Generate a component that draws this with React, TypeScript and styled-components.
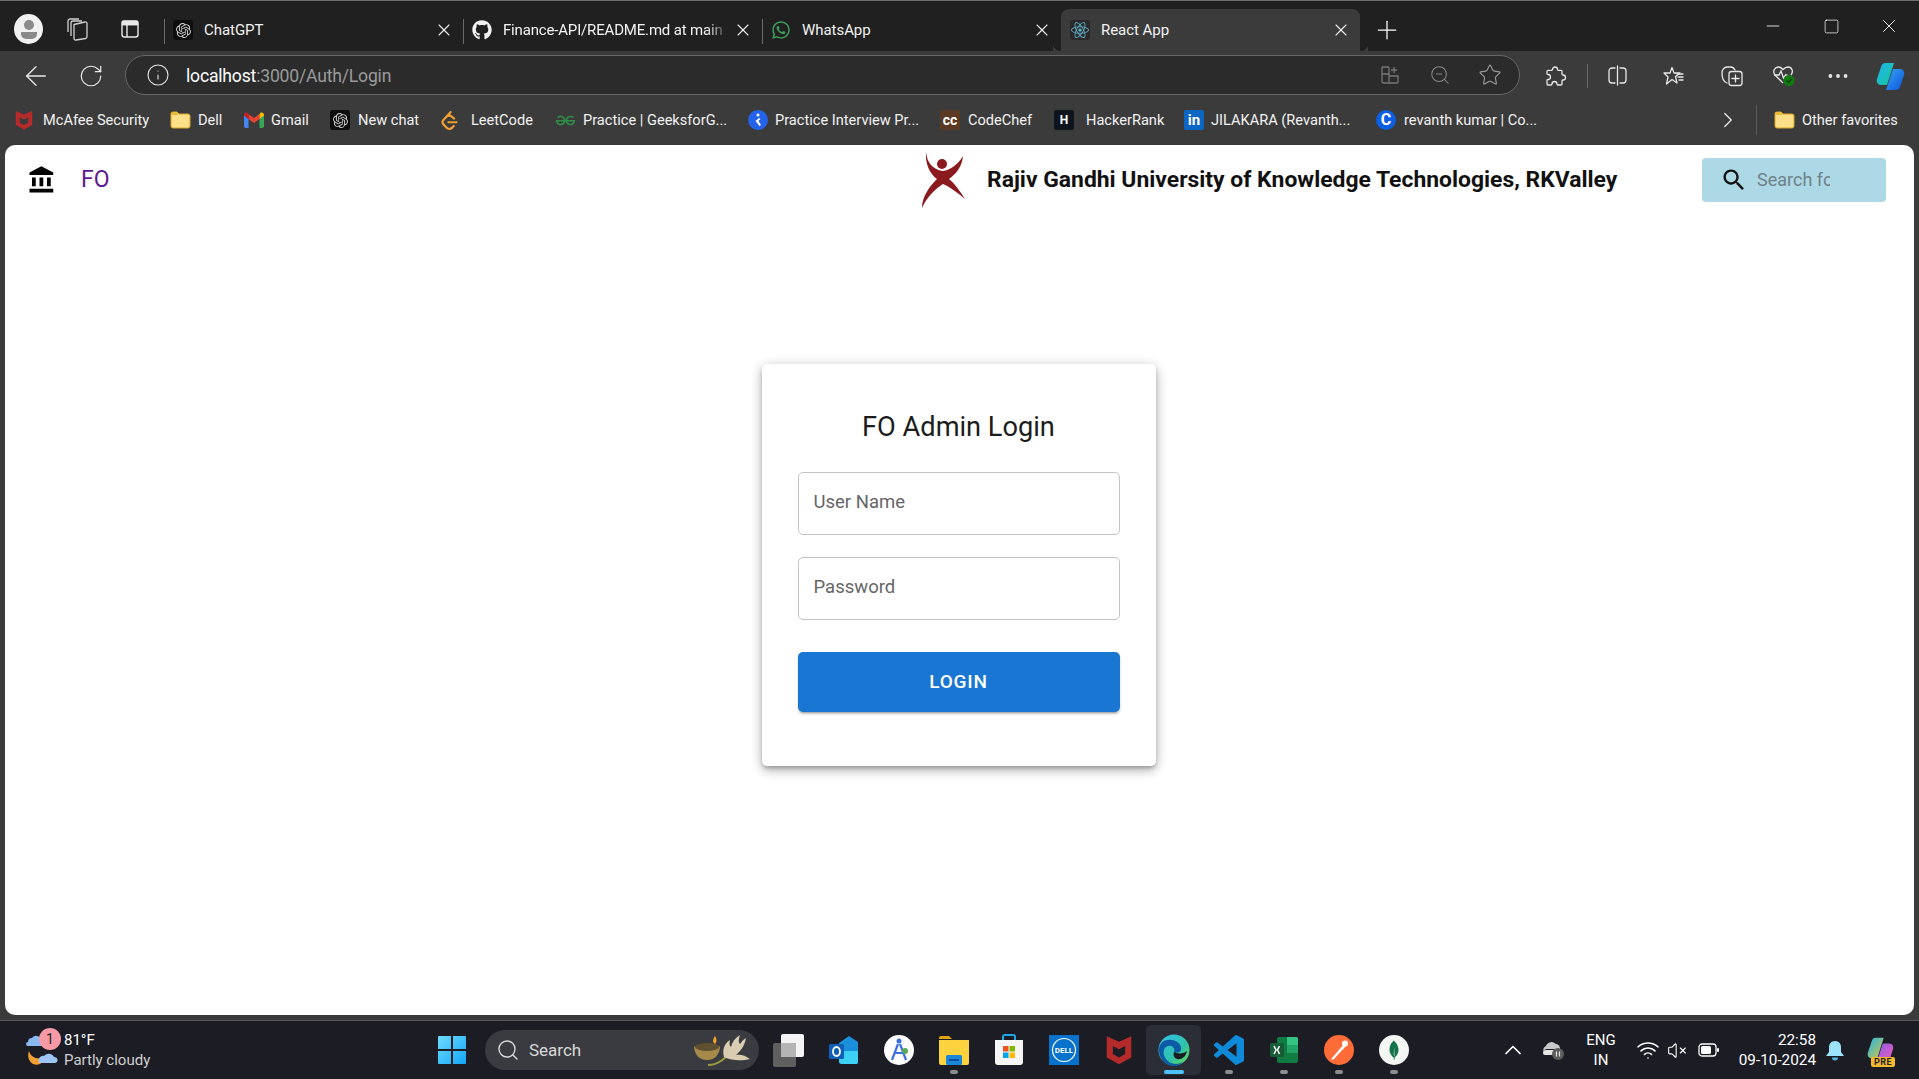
import styled, { createGlobalStyle } from "styled-components";
import type { ReactNode } from "react";
import { ArrowLeft, ChevronRight, ChevronUp, Info, Minus, MoreHorizontal, Plus, RotateCw, Search, Square, Star, VolumeX, Wifi, X, ZoomOut } from "lucide-react";
import { FaGithub, FaReact, FaWhatsapp } from "react-icons/fa";
import { SiGeeksforgeeks, SiLeetcode, SiMongodb, SiOpenai } from "react-icons/si";

const GlobalStyle = createGlobalStyle`
  html, body {
    margin: 0;
    padding: 0;
    overflow: hidden;
    background: #3b3b3b;
  }
  * {
    box-sizing: border-box;
  }
`;

const Screen = styled.div`
  width: 1919px;
  height: 1079px;
  display: flex;
  flex-direction: column;
  background: #3b3b3b;
  font-family: Roboto, "Liberation Sans", sans-serif;
  overflow: hidden;
`;

/* tab strip */
const TabStrip = styled.div`
  height: 51px;
  flex: none;
  display: flex;
  background: #202020;
  border-top: 1px solid #6e6e6e;
  color: #fff;
`;

const StripTools = styled.div`
  width: 164px;
  flex: none;
  display: flex;
  align-items: center;
  padding: 6px 0 0 14px;
`;

const Avatar = styled.div`
  width: 29px;
  height: 30px;
  flex: none;
  border-radius: 50%;
  background: #f1f1f1;
  display: flex;
  align-items: center;
  justify-content: center;
  margin-right: 22px;
`;

const StripIcon = styled.div<{ $w: number; $ml?: number }>`
  width: ${(p) => p.$w}px;
  margin-left: ${(p) => p.$ml || 0}px;
  flex: none;
  display: flex;
  justify-content: center;
`;

const Tab = styled.div<{ $active?: boolean; $sep?: boolean }>`
  position: relative;
  width: 299px;
  flex: none;
  height: 42px;
  margin-top: 8px;
  padding: 0 9px;
  display: flex;
  align-items: center;
  gap: 11px;
  font-size: 15px;
  color: #f2f2f2;
  border-radius: 8px 8px 0 0;
  background: ${(p) => (p.$active ? "#3b3b3b" : "transparent")};
  &::before {
    content: "";
    display: ${(p) => (p.$sep ? "block" : "none")};
    position: absolute;
    left: 0;
    top: 10px;
    width: 1px;
    height: 25px;
    background: #6a6a6a;
  }
  &::after {
    content: "";
    display: ${(p) => (p.$active ? "block" : "none")};
    position: absolute;
    bottom: 0;
    left: -8px;
    width: 315px;
    height: 8px;
    background:
      radial-gradient(circle at 0 0, #202020 8px, #3b3b3b 8.5px) right bottom / 8px 8px no-repeat,
      radial-gradient(circle at 100% 0, #202020 8px, #3b3b3b 8.5px) left bottom / 8px 8px no-repeat;
  }
`;

const Favicon = styled.span<{ $bg?: string }>`
  width: 20px;
  height: 20px;
  flex: none;
  display: flex;
  align-items: center;
  justify-content: center;
  border-radius: 3px;
  background: ${(p) => p.$bg || "transparent"};
`;

const TabTitle = styled.span<{ $fade?: boolean }>`
  flex: 1;
  margin-right: -7px;
  letter-spacing: ${(p) => (p.$fade ? "-0.17px" : "-0.05px")};
  white-space: nowrap;
  overflow: hidden;
  mask-image: ${(p) => (p.$fade ? "linear-gradient(to right, #000 90%, transparent)" : "none")};
`;

const TabClose = styled.span`
  width: 20px;
  flex: none;
  display: flex;
  justify-content: center;
`;

const NewTab = styled.div`
  width: 54px;
  flex: none;
  margin-top: 8px;
  display: flex;
  align-items: center;
  justify-content: center;
`;

const WindowButtons = styled.div`
  margin-left: auto;
  display: flex;
  align-items: center;
  padding-right: 1px;
`;

const WindowButton = styled.div`
  width: 58px;
  display: flex;
  justify-content: center;
`;

/* address bar */
const Toolbar = styled.div`
  height: 44px;
  flex: none;
  display: flex;
  align-items: flex-end;
  padding-left: 8px;
  color: #e8e8e8;
`;

const ToolSlot = styled.div<{ $w: number }>`
  width: ${(p) => p.$w}px;
  height: 39px;
  flex: none;
  display: flex;
  align-items: center;
  justify-content: center;
`;

const AddressBar = styled.div`
  width: 1395px;
  height: 40px;
  margin: 0 8px 0 7px;
  flex: none;
  display: flex;
  align-items: center;
  padding: 0 4px 0 20px;
  background: #2b2b2b;
  border: 1px solid #686868;
  border-radius: 20px;
`;

const Url = styled.div`
  margin-left: 16px;
  padding-top: 2px;
  font-size: 17.6px;
  letter-spacing: -0.2px;
  color: #9a9a9a;
  flex: 1;
  b {
    font-weight: 400;
    color: #fff;
  }
`;

const ToolDivider = styled.div`
  width: 1px;
  height: 24px;
  margin: 8px 0 7px 3px;
  background: #6a6a6a;
  flex: none;
`;

/* bookmarks */
const BookmarkBar = styled.div`
  height: 50px;
  flex: none;
  display: flex;
  align-items: center;
  padding-left: 13px;
  font-size: 14.6px;
  color: #f2f2f2;
`;

const Bookmark = styled.div<{ $w: number; $gap?: number }>`
  width: ${(p) => p.$w}px;
  flex: none;
  display: flex;
  align-items: center;
  gap: ${(p) => p.$gap || 7}px;
  white-space: nowrap;
`;

const BookmarkIcon = styled.span`
  width: 22px;
  flex: none;
  display: flex;
  justify-content: center;
`;

const BookmarkEnd = styled.div`
  margin-left: auto;
  display: flex;
  align-items: center;
  padding-right: 19px;
`;

const BarRule = styled.div`
  width: 1px;
  height: 30px;
  background: #5a5a5a;
  margin: 0 16px 0 15px;
`;

/* page */
const Page = styled.div`
  flex: 1;
  margin: 0 5px 5px;
  padding-right: 2px;
  background: #fff;
  border-radius: 10px;
  display: flex;
  flex-direction: column;
  align-items: center;
`;

const AppHeader = styled.header`
  width: 1909px;
  flex: none;
  align-self: flex-start;
  height: 69px;
  display: flex;
  align-items: center;
  padding: 0 28px 0 22px;
`;

const HeaderBrand = styled.div`
  width: 894px;
  flex: none;
  display: flex;
  align-items: center;
  gap: 24px;
  font-size: 23px;
  color: #5e1a8e;
`;

const College = styled.div`
  display: flex;
  align-items: center;
  gap: 20px;
  font-size: 22.9px;
  font-weight: 700;
  color: #111;
  white-space: nowrap;
`;

const SearchBox = styled.div`
  margin-left: auto;
  width: 184px;
  height: 44px;
  background: #add8e6;
  border-radius: 4px;
  display: flex;
  align-items: center;
  padding-left: 18px;
  gap: 9px;
`;

const SearchText = styled.span`
  width: 73px;
  overflow: hidden;
  white-space: nowrap;
  font-size: 18px;
  color: #6f8289;
`;

const Card = styled.form`
  width: 394px;
  height: 402px;
  margin-top: 150px;
  padding: 0 36px;
  background: #fff;
  border-radius: 5px;
  box-shadow: 0 3px 4px -1px rgba(0, 0, 0, 0.25), 0 5px 12px rgba(0, 0, 0, 0.2), 0 1px 14px rgba(0, 0, 0, 0.12);
  display: flex;
  flex-direction: column;
`;

const CardTitle = styled.h2`
  margin: 44px 0 26px;
  height: 38px;
  line-height: 38px;
  text-align: center;
  font-size: 27.2px;
  font-weight: 400;
  color: #1c1c1c;
`;

const Field = styled.input`
  width: 322px;
  height: 63px;
  margin-bottom: 22px;
  padding: 0 15px 3px;
  border: 1px solid #c4c4c4;
  border-radius: 5px;
  font-family: inherit;
  font-size: 18.5px;
  background: #fff;
  &::placeholder {
    color: #666;
    opacity: 1;
  }
`;

const LoginButton = styled.button`
  width: 322px;
  height: 60px;
  margin-top: 10px;
  padding: 0 0 2px;
  border: 0;
  border-radius: 5px;
  background: #1976d2;
  color: #fff;
  font-family: inherit;
  font-size: 19px;
  font-weight: 500;
  letter-spacing: 0.8px;
  box-shadow: 0 3px 2px -2px rgba(0, 0, 0, 0.25), 0 2px 3px rgba(0, 0, 0, 0.18);
`;

/* taskbar */
const Taskbar = styled.footer`
  height: 59px;
  flex: none;
  display: flex;
  align-items: center;
  padding-left: 24px;
  background: #1b1c24;
  border-top: 1px solid #55565a;
  color: #fff;
`;

const Weather = styled.div`
  position: relative;
  width: 413px;
  display: flex;
  align-items: center;
  gap: 6px;
`;

const WeatherBadge = styled.span`
  position: absolute;
  left: 15px;
  top: -2px;
  width: 22px;
  height: 22px;
  border-radius: 50%;
  background: #f79aa6;
  color: #222;
  font-size: 14px;
  display: flex;
  align-items: center;
  justify-content: center;
`;

const WeatherText = styled.div`
  font-size: 15px;
  line-height: 20px;
  color: #fff;
  div + div {
    color: #cfcfcf;
  }
`;

const TaskSearch = styled.div`
  width: 274px;
  height: 40px;
  margin-left: 18px;
  padding-left: 11px;
  border-radius: 20px;
  background: #3a3b40;
  display: flex;
  align-items: center;
  gap: 9px;
  font-size: 17px;
  color: #d8d8d8;
`;

const TaskSearchArt = styled.span`
  margin-left: auto;
  margin-right: 7px;
  display: flex;
`;

const Apps = styled.div`
  margin-left: 2px;
  display: flex;
`;

const AppSlot = styled.div<{ $active?: boolean; $running?: boolean }>`
  position: relative;
  width: 55px;
  height: 50px;
  display: flex;
  align-items: center;
  justify-content: center;
  border-radius: 5px;
  background: ${(p) => (p.$active ? "#2b2e36" : "transparent")};
  &::after {
    content: "";
    display: ${(p) => (p.$running || p.$active ? "block" : "none")};
    position: absolute;
    bottom: 1px;
    left: 50%;
    transform: translateX(-50%);
    width: ${(p) => (p.$active ? 20 : 8)}px;
    height: 4px;
    border-radius: 2px;
    background: ${(p) => (p.$active ? "#4cc2ff" : "#8d8d8f")};
  }
`;

const Tray = styled.div`
  margin-left: auto;
  padding-right: 13px;
  display: flex;
  align-items: center;
`;

const TraySlot = styled.div<{ $w: number }>`
  width: ${(p) => p.$w}px;
  display: flex;
  justify-content: center;
  align-items: center;
`;

const TrayLang = styled.div`
  width: 56px;
  text-align: center;
  font-size: 15px;
  line-height: 20px;
`;

const Clock = styled.div`
  width: 87px;
  text-align: right;
  font-size: 15.3px;
  line-height: 20px;
  white-space: nowrap;
`;

/* drawings */
const stroke = { fill: "none", stroke: "currentColor", strokeWidth: 1.3, strokeLinecap: "round", strokeLinejoin: "round" } as const;

const AvatarIcon = () => (
  <svg width="20" height="22" viewBox="0 0 20 22">
    <circle cx="10" cy="7" r="5" fill="#8a8a8a" />
    <path d="M2 14h16v2a5 5 0 0 1-5 5H7a5 5 0 0 1-5-5z" fill="#8a8a8a" />
  </svg>
);

const WorkspacesIcon = () => (
  <svg width="22" height="24" viewBox="0 0 22 24" fill="none" stroke="#cfcfcf" strokeWidth="1.300" strokeLinejoin="round">
    <path d="M8 7.500 19 5a1.500 1.500 0 0 1 2 1.500v13a2 2 0 0 1-1.500 2L10 23a1.500 1.500 0 0 1-2-1.500z" />
    <path d="M5 19V6a2 2 0 0 1 2-2h9M2 15V4a2 2 0 0 1 2-2h9" />
  </svg>
);

const VerticalTabsIcon = () => (
  <svg width="20" height="20" viewBox="0 0 20 20" fill="none" stroke="#e8e8e8" strokeWidth="1.4">
    <rect x="2" y="2" width="16" height="16" rx="2.5" />
    <path d="M2.5 5.5h15M7 5.5V18" />
    <path d="M2.5 2.5h15v3h-15z" fill="#e8e8e8" />
  </svg>
);

const Gmail = () => (
  <svg width="20" height="16" viewBox="0 0 20 16">
    <path d="M0 3v11a2 2 0 0 0 2 2h2.5V7z" fill="#4285f4" />
    <path d="M20 3v11a2 2 0 0 1-2 2h-2.5V7z" fill="#34a853" />
    <path d="M4.5 7 10 11l5.5-4V2L10 6 4.5 2z" fill="#ea4335" />
    <path d="M0 3c0-2.5 3-3.5 4.5-1v5L0 3.5z" fill="#c5221f" />
    <path d="M20 3c0-2.5-3-3.5-4.5-1v5L20 3.500z" fill="#fbbc04" />
  </svg>
);

const McAfee = ({ size = 20 }: { size?: number }) => (
  <svg width={size} height={size} viewBox="0 0 20 22">
    <path
      d="M1 1 10 5 19 1V16.500L10 21.500 1 16.500ZM5.500 8V14L10 16.500 14.500 14V8L10 10.500Z"
      fill="#b52a2a"
      fillRule="evenodd"
    />
  </svg>
);

const Folder = () => (
  <svg width="21" height="20" viewBox="0 0 21 20">
    <path d="M1 4a2 2 0 0 1 2-2h4l2 2h9a2 2 0 0 1 2 2v10a2 2 0 0 1-2 2H3a2 2 0 0 1-2-2z" fill="#ffe08a" stroke="#d9a520" />
    <path d="M1 4a2 2 0 0 1 2-2h4l2 2-2 1H1z" fill="#e8b93a" />
  </svg>
);

const SquareFavicon = styled.span<{ $bg: string; $color: string; $round?: boolean; $size?: number }>`
  width: 20px;
  height: 20px;
  flex: none;
  border-radius: ${(p) => (p.$round ? "50%" : "2px")};
  background: ${(p) => p.$bg};
  color: ${(p) => p.$color};
  font-size: ${(p) => p.$size || 12}px;
  font-weight: 700;
  line-height: 20px;
  text-align: center;
  overflow: hidden;
`;

const KIcon = () => (
  <svg width="20" height="20" viewBox="0 0 20 20">
    <circle cx="10" cy="10" r="10" fill="#2563eb" />
    <circle cx="10" cy="5" r="1.500" fill="#fff" />
    <path d="M11 8 7.500 11l4 5 1.500-1-2.500-4 2-2z" fill="#fff" />
  </svg>
);

const ExtensionIcon = () => (
  <svg width="22" height="22" viewBox="0 0 22 22" {...stroke}>
    <path d="M7.500 4.500a2.500 2.500 0 0 1 5 0c0 .5 0 .8 1 .8h2.500a1 1 0 0 1 1 1v2.700c0 .8.500 1 1 1a2.500 2.500 0 0 1 0 5c-.5 0-1 .2-1 1V19a1 1 0 0 1-1 1h-3c-.8 0-1-.5-1-1a2.500 2.500 0 0 0-5 0c0 .5-.2 1-1 1H3a1 1 0 0 1-1-1v-3.500c0-.8.500-1 1-1a2.500 2.500 0 0 0 0-5c-.5 0-1-.2-1-1V6.300a1 1 0 0 1 1-1h3.500c.5 0 1-.3 1-.8z" />
  </svg>
);

const SplitIcon = () => (
  <svg width="21" height="21" viewBox="0 0 21 21" {...stroke}>
    <path d="M8 3H5a3 3 0 0 0-3 3v9a3 3 0 0 0 3 3h3M13 3h3a3 3 0 0 1 3 3v9a3 3 0 0 1-3 3h-3M10.500 1v19" />
  </svg>
);

const FavoritesIcon = () => (
  <svg width="22" height="22" viewBox="0 0 22 22" {...stroke}>
    <path d="M9 2.500 11 8h6l-4.500 3.500L14 18l-5-3.500L3.500 19l1.500-7L1 8h6z" />
    <path d="M15 12h5M16 15h4M14 9h6" />
  </svg>
);

const CollectionsIcon = () => (
  <svg width="23" height="23" viewBox="0 0 23 23" {...stroke}>
    <path d="M7 19c-3-1-5-5-5-10 0-3 2-6 5-6h4c2 0 3 1 4 3" />
    <rect x="9" y="7.500" width="13" height="14" rx="2.500" />
    <path d="M15.500 11v7M12 14.500h7" />
  </svg>
);

const HealthIcon = () => (
  <svg width="24" height="22" viewBox="0 0 24 22">
    <path d="M11 18 3 10C0 6 3 2 6.500 2 9 2 10 3.500 11 4.500 12 3.500 13.500 2 16 2c3.500 0 6 4 3 8" fill="none" stroke="currentColor" strokeWidth="1.3" />
    <path d="M2 10h5l2-4 2.500 7 2-3h2" fill="none" stroke="currentColor" strokeWidth="1.3" />
    <circle cx="17" cy="15.500" r="5.500" fill="#107c10" />
    <path d="m14.500 15.500 2 2 3-3.500" fill="none" stroke="#0b3d0b" strokeWidth="1.300" />
  </svg>
);

const AppSquaresIcon = () => (
  <svg width="20" height="20" viewBox="0 0 20 20" fill="none" stroke="#777" strokeWidth="1.300">
    <path d="M8 2H3a1 1 0 0 0-1 1v6h7V3a1 1 0 0 0-1-1zM2 9v7a2 2 0 0 0 2 2h5V9zM9 11h9v6a1 1 0 0 1-1 1H9zM14 2v6M11 5h6" />
  </svg>
);

const CopilotIcon = ({ size = 30, tray }: { size?: number; tray?: boolean }) => (
  <svg width={size} height={size} viewBox="0 0 30 30">
    <defs>
      <linearGradient id={tray ? "cpTa" : "cpA"} x1="0" y1="0" x2="1" y2="1">
        <stop offset="0" stopColor="#1fb5ef" />
        <stop offset="1" stopColor={tray ? "#d9c63a" : "#16c79a"} />
      </linearGradient>
      <linearGradient id={tray ? "cpTb" : "cpB"} x1="0" y1="0" x2="1" y2="1">
        <stop offset="0" stopColor={tray ? "#8a5cf0" : "#35a7f5"} />
        <stop offset="1" stopColor={tray ? "#f05cb0" : "#0f52d9"} />
      </linearGradient>
    </defs>
    <path d="M10 2h9l-7 22H6c-3 0-5-3-4-6l4-12c1-3 2-4 4-4z" fill={tray ? "url(#cpTa)" : "url(#cpA)"} />
    <path d="M18 8h7c3 0 5 3 4 6l-4 12c-1 2-2 3-4 3h-10z" fill={tray ? "url(#cpTb)" : "url(#cpB)"} />
  </svg>
);

const WeatherIcon = () => (
  <svg width="34" height="38" viewBox="0 0 34 38">
    <path d="M4 11a4 4 0 0 1 4-4 5 5 0 0 1 9 2 3 3 0 0 1 0 6H4a2 2 0 0 1 0-4z" fill="#8ab8f0" />
    <path d="M5 20c2 7 9 9 16 6-2 7-7 9-12 7-4-2-6-8-4-13z" fill="#f2a12e" />
    <path d="M15 28a4 4 0 0 1 5-3 6 6 0 0 1 10 1 3 3 0 0 1 1 6H16a2.500 2.500 0 0 1-1-4z" fill="#9cc5f5" />
  </svg>
);

const WindowsLogo = () => (
  <svg width="30" height="30" viewBox="0 0 30 30">
    <defs>
      <linearGradient id="winA" x1="0" y1="0" x2="1" y2="1">
        <stop offset="0" stopColor="#6fdcff" />
        <stop offset="1" stopColor="#12a5f5" />
      </linearGradient>
    </defs>
    <path d="M1 2a1 1 0 0 1 1-1h12v13H1zM16 1h12a1 1 0 0 1 1 1v12H16zM1 16h13v13H2a1 1 0 0 1-1-1zM16 16h13v12a1 1 0 0 1-1 1H16z" fill="url(#winA)" />
  </svg>
);

const DiyaArt = () => (
  <svg width="58" height="36" viewBox="0 0 58 36">
    <path d="M21 4c2 3 2 6 0 8-3-2-2-5 0-8z" fill="#f5a623" />
    <path d="M0 15c4-4 22-4 26 0-1 9-6 13-13 13S1 24 0 15z" fill="#a68a4a" />
    <ellipse cx="13" cy="15" rx="12" ry="4" fill="#5f5130" />
    <path d="M14 33c10 0 16-6 22-12" stroke="#9a9b3f" strokeWidth="2" fill="none" />
    <path d="M30 25c-2-7 0-13 6-17-1 5 0 6 1 7 1-5 4-9 9-12-2 6-1 8 0 9 2-3 4-5 6-6-1 6-4 12-10 17 4-1 9 0 14 4-8 2-18 2-26-2z" fill="#d9ccb0" />
  </svg>
);

const ExcelIcon = () => (
  <svg width="30" height="30" viewBox="0 0 30 30">
    <rect x="8" y="2" width="21" height="26" rx="2" fill="#107c41" />
    <path d="M18 2h9a2 2 0 0 1 2 2v6H18z" fill="#33c481" />
    <path d="M18 10h11v8H18z" fill="#21a366" />
    <rect x="1" y="8" width="14" height="14" rx="1.500" fill="#185c37" />
    <path d="m5 11 2 4-2 4M10.500 11l-2 4 2 4" stroke="#fff" strokeWidth="1.500" fill="none" />
  </svg>
);

const VsCodeIcon = () => (
  <svg width="30" height="30" viewBox="0 0 24 24">
    <path d="M23.15 2.587 18.210.21a1.490 1.490 0 0 0-1.705.29l-9.460 8.630-4.120-3.128a.999.999 0 0 0-1.276.057L.327 7.261A1 1 0 0 0 .326 8.740L3.899 12 .326 15.260a1 1 0 0 0 .001 1.479L1.650 17.940a.999.999 0 0 0 1.276.057l4.120-3.128 9.460 8.630a1.492 1.492 0 0 0 1.704.290l4.942-2.377A1.500 1.500 0 0 0 24 20.060V3.939a1.500 1.500 0 0 0-.850-1.352zm-5.146 14.861L10.826 12l7.178-5.448z" fill="#0e8ad8" />
  </svg>
);

const OutlookIcon = () => (
  <svg width="30" height="30" viewBox="0 0 30 30">
    <path d="M10 8 20 1l9 6v20a2 2 0 0 1-2 2H13a3 3 0 0 1-3-3z" fill="#1a8fdc" />
    <path d="M10 16h19v11a2 2 0 0 1-2 2H13a3 3 0 0 1-3-3z" fill="#3cd0f5" />
    <rect x="0" y="9" width="15" height="15" rx="1.500" fill="#0f5fb8" />
    <ellipse cx="7.500" cy="16.500" rx="3.500" ry="4.500" fill="none" stroke="#fff" strokeWidth="1.800" />
  </svg>
);

const AppCompassIcon = () => (
  <svg width="30" height="30" viewBox="0 0 30 30">
    <circle cx="15" cy="15" r="15" fill="#fff" />
    <circle cx="15" cy="6" r="2.500" fill="#3c6fe0" />
    <path d="M14 9 8 25M16 9l6 16M10 18h10" stroke="#3c6fe0" strokeWidth="2.200" fill="none" />
    <circle cx="21" cy="16" r="3" fill="#5aa95a" />
  </svg>
);

const ExplorerIcon = () => (
  <svg width="32" height="30" viewBox="0 0 32 30">
    <path d="M1 3a2 2 0 0 1 2-2h8l3 3h-13z" fill="#e0a411" />
    <path d="M1 5h30v23a2 2 0 0 1-2 2H3a2 2 0 0 1-2-2z" fill="#fcd23f" />
    <rect x="8" y="20" width="16" height="10" rx="1.500" fill="#1a86d8" />
    <rect x="11" y="24" width="10" height="2" fill="#0d4f9a" />
  </svg>
);

const StoreIcon = () => (
  <svg width="30" height="32" viewBox="0 0 30 32">
    <path d="M9 6V3a2 2 0 0 1 2-2h8a2 2 0 0 1 2 2v3" fill="none" stroke="#1ea7e8" strokeWidth="2" />
    <path d="M1 6h28v22a3 3 0 0 1-3 3H4a3 3 0 0 1-3-3z" fill="#f6f6f6" />
    <rect x="9" y="12" width="5.500" height="5.500" fill="#f25022" />
    <rect x="15.500" y="12" width="5.500" height="5.500" fill="#7fba00" />
    <rect x="9" y="18.500" width="5.500" height="5.500" fill="#00a4ef" />
    <rect x="15.500" y="18.500" width="5.500" height="5.500" fill="#ffb900" />
  </svg>
);

const DellIcon = () => (
  <svg width="30" height="30" viewBox="0 0 30 30">
    <rect width="30" height="30" fill="#0672cb" />
    <circle cx="15" cy="15" r="11.500" fill="none" stroke="#fff" strokeWidth="1.200" />
    <text x="15" y="18" textAnchor="middle" fontSize="8" fontWeight="700" fill="#fff" fontFamily="Roboto">DELL</text>
  </svg>
);

const EdgeIcon = () => (
  <svg width="32" height="32" viewBox="0 0 32 32">
    <defs>
      <linearGradient id="edA" x1="0" y1="0" x2="1" y2="1">
        <stop offset="0" stopColor="#35c1f1" />
        <stop offset="0.6" stopColor="#2fc2a8" />
        <stop offset="1" stopColor="#6fdc4c" />
      </linearGradient>
    </defs>
    <circle cx="16" cy="16" r="15.500" fill="url(#edA)" />
    <path d="M1 16C1 8 8 5 14 6c6 1 10 5 9 10-1 3-5 3-7 2 2-5-4-8-8-5-4 3-3 11 3 15 3 2 9 3 14 0-3 3-6 4-9 4C8 32 1 25 1 16z" fill="#0c59a4" />
    <path d="M16 18c3 2 10 2 13-1-1 6-6 9-10 8-3-1-4-4-3-7z" fill="#1a1c24" />
  </svg>
);

const PostmanIcon = () => (
  <svg width="30" height="30" viewBox="0 0 30 30">
    <circle cx="15" cy="15" r="15" fill="#ff6c37" />
    <path d="M8 23 20 9l2 2-12 13-3 1z" fill="#fff" />
    <circle cx="21" cy="8.500" r="3" fill="#fff" />
  </svg>
);

const MongoIcon = () => (
  <svg width="30" height="30" viewBox="0 0 30 30">
    <circle cx="15" cy="15" r="15" fill="#f4f6f4" />
    <foreignObject x="5" y="5" width="20" height="20">
      <SiMongodb size={20} color="#12734a" />
    </foreignObject>
  </svg>
);

const RkvLogo = () => (
  <svg width="70" height="66" viewBox="0 0 70 66" style={{ margin: "0 -13px 0 -11px" }}>
    <circle cx="32" cy="17" r="5" fill="#8b1a1f" />
    <path d="M16 5C17 15 22 22 32 24 38 24 48 18 53 9 52 20 46 27 39 32 45 37 50 44 55 52 48 46 40 40 33 37 25 42 17 50 12 61 12 49 20 39 27 32 20 27 15 17 16 5Z" fill="#8b1a1f" />
  </svg>
);

const BankIcon = () => (
  <svg width="30" height="30" viewBox="0 0 24 24" fill="#000">
    <path d="M4 10v7h3v-7H4zm6 0v7h3v-7h-3zM2 22h19v-3H2v3zm14-12v7h3v-7h-3zm-4.500-9L2 6v2h19V6l-9.500-5z" />
  </svg>
);

const SearchGlyph = () => (
  <svg width="28" height="28" viewBox="0 0 24 24" fill="#111">
    <path d="M15.500 14h-.79l-.28-.27C15.410 12.590 16 11.110 16 9.500 16 5.910 13.090 3 9.500 3S3 5.910 3 9.500 5.910 16 9.500 16c1.610 0 3.090-.59 4.230-1.570l.27.28v.79l5 4.990L20.490 19l-4.990-5zm-6 0C7.010 14 5 11.990 5 9.500S7.010 5 9.500 5 14 7.010 14 9.500 11.990 14 9.500 14z" />
  </svg>
);

const CloudPaused = () => (
  <svg width="22" height="20" viewBox="0 0 22 20">
    <path d="M2 12a4 4 0 0 1 2-6 6 6 0 0 1 10-2 5 5 0 0 1 4 5H5a3 3 0 0 0-3 3z" fill="#c9c9c9" />
    <path d="M1 13a3 3 0 0 1 3-3h11v5H3a2 2 0 0 1-2-2z" fill="#e6e6e6" />
    <circle cx="16" cy="14" r="6" fill="#5d5d5d" />
    <path d="M14.500 11.500v5M17.500 11.500v5" stroke="#e6e6e6" strokeWidth="1.200" />
  </svg>
);

const BatteryIcon = () => (
  <svg width="21" height="14" viewBox="0 0 21 14">
    <rect x="1" y="1" width="17" height="12" rx="3" fill="none" stroke="#fff" strokeWidth="1.300" />
    <rect x="3" y="3" width="10" height="8" rx="1.500" fill="#fff" />
    <rect x="19" y="5" width="2" height="4" rx="1" fill="#fff" />
  </svg>
);

const BellIcon = () => (
  <svg width="18" height="21" viewBox="0 0 18 21">
    <path d="M9 1c4 0 6 3 6 6v5l3 4H0l3-4V7c0-3 2-6 6-6z" fill="#9be4fb" />
    <path d="M6 17.500h6a3 3 0 0 1-6 0z" fill="#56b8e0" />
  </svg>
);

const PreTag = styled.span`
  position: absolute;
  left: 5px;
  bottom: -3px;
  padding: 0 3px;
  border-radius: 2px;
  background: #f7b92d;
  color: #222;
  font-size: 9px;
  font-weight: 700;
  line-height: 10px;
  letter-spacing: 0.5px;
`;

const CopilotTray = styled.div`
  position: relative;
  display: flex;
`;

const tabs: { title: string; icon: ReactNode; bg?: string; sep: boolean; fade?: boolean; active?: boolean }[] = [
  { title: "ChatGPT", icon: <SiOpenai size={15} color="#cfcfcf" />, bg: "#0d0d0d", sep: true },
  { title: "Finance-API/README.md at main", icon: <FaGithub size={20} color="#f2f2f2" />, sep: true, fade: true },
  { title: "WhatsApp", icon: <FaWhatsapp size={20} color="#3e9e5a" />, sep: true },
  { title: "React App", icon: <FaReact size={18} color="#61b8d8" />, bg: "#2a2a2a", sep: false, active: true },
];

const bookmarks: { label: string; w: number; gap?: number; icon: ReactNode }[] = [
  { label: "McAfee Security", w: 156, gap: 8, icon: <McAfee /> },
  { label: "Dell", w: 74, icon: <Folder /> },
  { label: "Gmail", w: 86, gap: 6, icon: <Gmail /> },
  { label: "New chat", w: 109, icon: <Favicon $bg="#0d0d0d"><SiOpenai size={15} color="#cfcfcf" /></Favicon> },
  { label: "LeetCode", w: 116, gap: 11, icon: <Favicon><SiLeetcode size={19} color="#f0a030" /></Favicon> },
  { label: "Practice | GeeksforG...", w: 193, icon: <Favicon><SiGeeksforgeeks size={19} color="#2f8d46" /></Favicon> },
  { label: "Practice Interview Pr...", w: 192, gap: 6, icon: <KIcon /> },
  { label: "CodeChef", w: 114, icon: <SquareFavicon $bg="#5b3a21" $color="#fff" $size={14}>cc</SquareFavicon> },
  { label: "HackerRank", w: 130, gap: 11, icon: <SquareFavicon $bg="#0e141e" $color="#fff">H</SquareFavicon> },
  { label: "JILAKARA (Revanth...", w: 192, gap: 6, icon: <SquareFavicon $bg="#0a66c2" $color="#fff" $size={15}>in</SquareFavicon> },
  { label: "revanth kumar | Co...", w: 160, icon: <SquareFavicon $bg="#0b5fe0" $color="#fff" $round $size={16}>C</SquareFavicon> },
];

const apps: { key: string; icon: ReactNode; running?: boolean; active?: boolean }[] = [
  { key: "copy", icon: <svg width="32" height="34" viewBox="0 0 32 34"><rect x="0" y="10" width="23" height="24" rx="2" fill="#5f5f5f" /><rect x="8" y="1" width="23" height="23" rx="2" fill="#f4f4f4" /><rect x="8" y="10" width="15" height="14" fill="#b5b5b5" /></svg> },
  { key: "outlook", icon: <OutlookIcon /> },
  { key: "compass", icon: <AppCompassIcon /> },
  { key: "explorer", icon: <ExplorerIcon />, running: true },
  { key: "store", icon: <StoreIcon /> },
  { key: "dell", icon: <DellIcon /> },
  { key: "mcafee", icon: <McAfee size={30} /> },
  { key: "edge", icon: <EdgeIcon />, active: true },
  { key: "vscode", icon: <VsCodeIcon />, running: true },
  { key: "excel", icon: <ExcelIcon />, running: true },
  { key: "postman", icon: <PostmanIcon />, running: true },
  { key: "mongo", icon: <MongoIcon />, running: true },
];

function BrowserChrome() {
  return (
    <>
      <TabStrip>
        <StripTools>
          <Avatar><AvatarIcon /></Avatar>
          <StripIcon $w={24}><WorkspacesIcon /></StripIcon>
          <StripIcon $w={20} $ml={31}><VerticalTabsIcon /></StripIcon>
        </StripTools>
        {tabs.map((tab) => (
          <Tab key={tab.title} $active={tab.active} $sep={tab.sep}>
            <Favicon $bg={tab.bg}>{tab.icon}</Favicon>
            <TabTitle $fade={tab.fade}>{tab.title}</TabTitle>
            <TabClose><X size={20} strokeWidth={1.3} /></TabClose>
          </Tab>
        ))}
        <NewTab><Plus size={30} strokeWidth={1} /></NewTab>
        <WindowButtons>
          <WindowButton><Minus size={20} strokeWidth={1} /></WindowButton>
          <WindowButton><Square size={17} strokeWidth={1} /></WindowButton>
          <WindowButton><X size={22} strokeWidth={1} /></WindowButton>
        </WindowButtons>
      </TabStrip>
      <Toolbar>
        <ToolSlot $w={55}><ArrowLeft size={32} strokeWidth={1} /></ToolSlot>
        <ToolSlot $w={55}><RotateCw size={26} strokeWidth={1.1} /></ToolSlot>
        <AddressBar>
          <Info size={24} strokeWidth={1.1} />
          <Url><b>localhost</b>:3000/Auth/Login</Url>
          <ToolSlot $w={50}><AppSquaresIcon /></ToolSlot>
          <ToolSlot $w={50}><ZoomOut size={22} strokeWidth={1.1} color="#8a8a8a" /></ToolSlot>
          <ToolSlot $w={50}><Star size={24} strokeWidth={1.1} color="#9a9a9a" /></ToolSlot>
        </AddressBar>
        <ToolSlot $w={56}><ExtensionIcon /></ToolSlot>
        <ToolDivider />
        <ToolSlot $w={58}><SplitIcon /></ToolSlot>
        <ToolSlot $w={56}><FavoritesIcon /></ToolSlot>
        <ToolSlot $w={58}><CollectionsIcon /></ToolSlot>
        <ToolSlot $w={48}><HealthIcon /></ToolSlot>
        <ToolSlot $w={60}><MoreHorizontal size={26} strokeWidth={1.5} /></ToolSlot>
        <ToolSlot $w={44}><CopilotIcon /></ToolSlot>
      </Toolbar>
      <BookmarkBar>
        {bookmarks.map((item) => (
          <Bookmark key={item.label} $w={item.w} $gap={item.gap}>
            <BookmarkIcon>{item.icon}</BookmarkIcon>
            <span>{item.label}</span>
          </Bookmark>
        ))}
        <BookmarkEnd>
          <ChevronRight size={26} strokeWidth={1.1} />
          <BarRule />
          <Bookmark $w={127}>
            <BookmarkIcon><Folder /></BookmarkIcon>
            <span>Other favorites</span>
          </Bookmark>
        </BookmarkEnd>
      </BookmarkBar>
    </>
  );
}

function WindowsTaskbar() {
  return (
    <Taskbar>
      <Weather>
        <WeatherIcon />
        <WeatherBadge>1</WeatherBadge>
        <WeatherText>
          <div>81°F</div>
          <div>Partly cloudy</div>
        </WeatherText>
      </Weather>
      <WindowsLogo />
      <TaskSearch>
        <Search size={24} strokeWidth={1.4} />
        Search
        <TaskSearchArt><DiyaArt /></TaskSearchArt>
      </TaskSearch>
      <Apps>
        {apps.map((app) => (
          <AppSlot key={app.key} $active={app.active} $running={app.running}>
            {app.icon}
          </AppSlot>
        ))}
      </Apps>
      <Tray>
        <TraySlot $w={40}><ChevronUp size={28} strokeWidth={1.5} /></TraySlot>
        <TraySlot $w={40}><CloudPaused /></TraySlot>
        <TrayLang>ENG<br />IN</TrayLang>
        <TraySlot $w={38}><Wifi size={24} strokeWidth={1.6} /></TraySlot>
        <TraySlot $w={20}><VolumeX size={23} strokeWidth={1.3} /></TraySlot>
        <TraySlot $w={42}><BatteryIcon /></TraySlot>
        <Clock>22:58<br />09-10-2024</Clock>
        <TraySlot $w={38}><BellIcon /></TraySlot>
        <TraySlot $w={52}>
          <CopilotTray>
            <CopilotIcon size={28} tray />
            <PreTag>PRE</PreTag>
          </CopilotTray>
        </TraySlot>
      </Tray>
    </Taskbar>
  );
}

export default function App() {
  return (
    <Screen>
      <GlobalStyle />
      <BrowserChrome />
      <Page>
        <AppHeader>
          <HeaderBrand>
            <BankIcon />
            FO
          </HeaderBrand>
          <College>
            <RkvLogo />
            Rajiv Gandhi University of Knowledge Technologies, RKValley
          </College>
          <SearchBox>
            <SearchGlyph />
            <SearchText>Search fo</SearchText>
          </SearchBox>
        </AppHeader>
        <Card>
          <CardTitle>FO Admin Login</CardTitle>
          <Field placeholder="User Name" />
          <Field type="password" placeholder="Password" />
          <LoginButton type="button">LOGIN</LoginButton>
        </Card>
      </Page>
      <WindowsTaskbar />
    </Screen>
  );
}
